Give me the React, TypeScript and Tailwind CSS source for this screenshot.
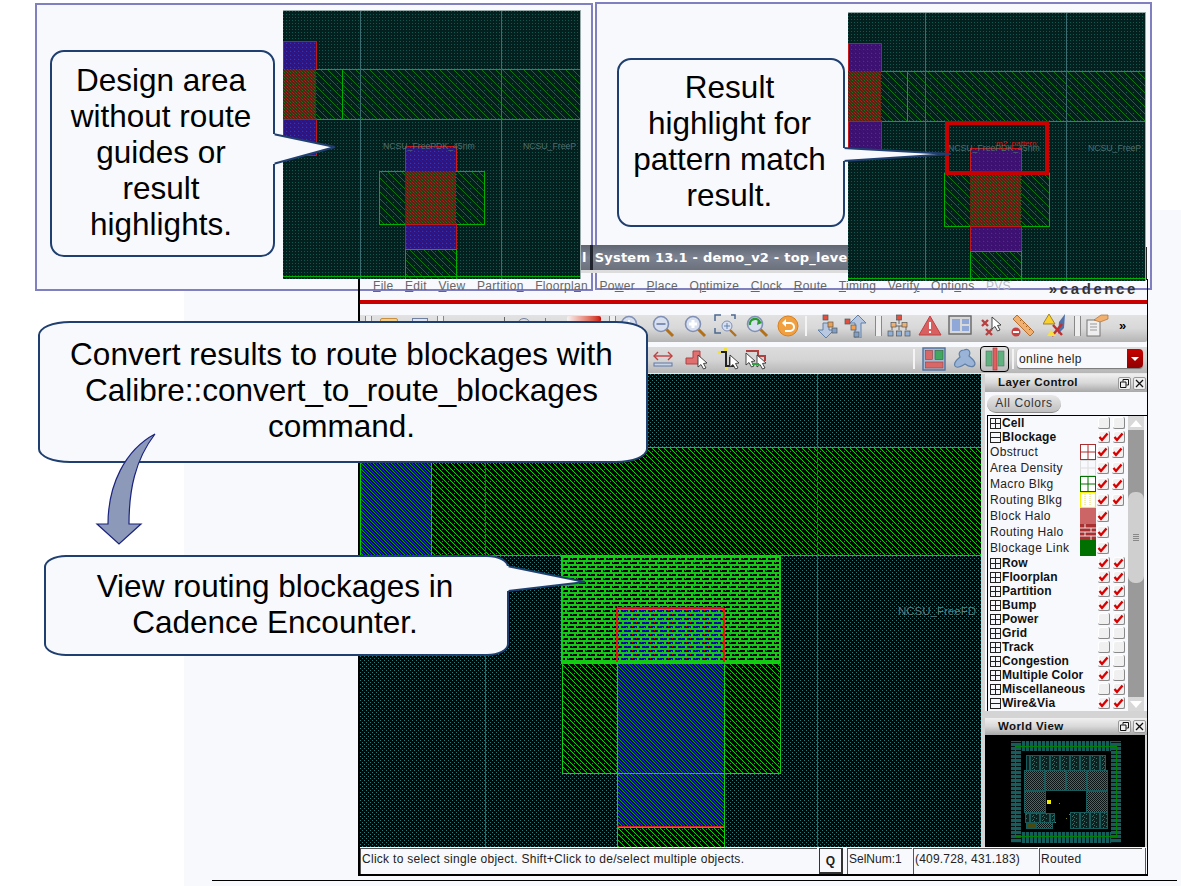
import React from "react";

const F = { fontFamily: '"Liberation Sans", Arial, sans-serif' };

const range = (n: number) => Array.from({ length: n }, (_, i) => i);

function Dither() {
  return (
    <>
      {range(6).map((y) =>
        range(6).map((x) => {
          const m = ((x - y) % 6 + 6) % 6;
          const c = m === 0 ? "#00a800" : m === 3 ? "#c80000" : m === 4 ? "#000060" : "#0000c8";
          return <rect key={`${x}-${y}`} x={x} y={y} width="1" height="1" fill={c} />;
        })
      )}
    </>
  );
}

function DiagPixels({ c, n }: { c: string; n: number }) {
  return (
    <>
      {range(n).map((i) => (
        <rect key={i} x={i} y={i} width="1" height="1" fill={c} />
      ))}
    </>
  );
}

function Defs() {
  return (
    <svg width="0" height="0" className="absolute">
      <defs>
        <pattern id="dots" width="4" height="4" patternUnits="userSpaceOnUse">
          <rect width="4" height="4" fill="#000" />
          <rect x="0" y="0" width="1" height="1" fill="#1a8080" />
          <rect x="2" y="2" width="1" height="1" fill="#1a8080" />
        </pattern>
        <pattern id="hatch" width="6" height="6" patternUnits="userSpaceOnUse">
          <rect width="6" height="6" fill="#000" />
          <rect x="4" y="1" width="1" height="1" fill="#1a8080" />
          <DiagPixels c="#00e000" n={6} />
        </pattern>
        <pattern id="brick" width="9" height="8" patternUnits="userSpaceOnUse">
          <rect width="9" height="8" fill="#14c814" />
          <rect x="0" y="2" width="7" height="2" fill="#000" />
          <rect x="3" y="6" width="6" height="2" fill="#000" />
          <rect x="0" y="6" width="1" height="2" fill="#000" />
          <rect x="1" y="2" width="1" height="1" fill="#1a8080" />
          <rect x="5" y="6" width="1" height="1" fill="#1a8080" />
        </pattern>
        <pattern id="brickblue" width="9" height="8" patternUnits="userSpaceOnUse">
          <rect width="9" height="8" fill="#14c814" />
          <rect x="0" y="2" width="7" height="2" fill="#0000b0" />
          <rect x="3" y="6" width="6" height="2" fill="#0000b0" />
          <rect x="0" y="6" width="1" height="2" fill="#0000b0" />
          <rect x="2" y="2" width="1" height="1" fill="#c80000" />
          <rect x="5" y="3" width="1" height="1" fill="#00a800" />
          <rect x="6" y="6" width="1" height="1" fill="#c80000" />
        </pattern>
        <pattern id="blueh" width="6" height="6" patternUnits="userSpaceOnUse">
          <Dither />
        </pattern>
        <pattern id="sd" width="3" height="3" patternUnits="userSpaceOnUse">
          <rect width="3" height="3" fill="#04201e" />
          <rect width="1" height="1" fill="#0b5a52" />
        </pattern>
        <pattern id="sh" width="7" height="7" patternUnits="userSpaceOnUse">
          <rect width="7" height="7" fill="#04201a" />
          <DiagPixels c="#067a10" n={7} />
          <rect x="5" y="2" width="1" height="1" fill="#0b5a52" />
        </pattern>
        <pattern id="spurple" width="4" height="4" patternUnits="userSpaceOnUse">
          <rect width="4" height="4" fill="#3c1070" />
          <DiagPixels c="#20209a" n={4} />
          <rect x="3" y="0" width="1" height="1" fill="#8a1c50" />
        </pattern>
        <pattern id="sred" width="3" height="3" patternUnits="userSpaceOnUse">
          <rect width="3" height="3" fill="#4a2a14" />
          <rect x="0" y="0" width="1" height="1" fill="#b01818" />
          <rect x="1" y="1" width="1" height="1" fill="#1e7018" />
          <rect x="2" y="2" width="1" height="1" fill="#8a2010" />
        </pattern>
        <pattern id="wmring" width="4" height="4" patternUnits="userSpaceOnUse">
          <rect width="4" height="4" fill="#175c5c" />
          <rect x="2" width="1" height="4" fill="#041414" />
        </pattern>
        <pattern id="wmringh" width="4" height="4" patternUnits="userSpaceOnUse">
          <rect width="4" height="4" fill="#175c5c" />
          <rect y="2" width="4" height="1" fill="#041414" />
        </pattern>
        <pattern id="wmchk" width="2" height="2" patternUnits="userSpaceOnUse">
          <rect width="2" height="2" fill="#0a1414" />
          <rect width="1" height="1" fill="#3c6e66" />
          <rect x="1" y="1" width="1" height="1" fill="#3c6e66" />
        </pattern>
        <pattern id="wmstr" width="10" height="4" patternUnits="userSpaceOnUse">
          <rect width="10" height="4" fill="#0f2020" />
          <rect x="3" width="1" height="1" fill="#3c6e66" />
          <rect x="5" y="1" width="1" height="1" fill="#3c6e66" />
          <rect x="7" y="2" width="1" height="1" fill="#3c6e66" />
          <rect x="4" y="3" width="1" height="1" fill="#3c6e66" />
          <rect width="2" height="4" fill="#175c5c" />
        </pattern>
      </defs>
    </svg>
  );
}

function SmallLayout({ result }: { result?: boolean }) {
  return (
    <svg width="297" height="268" viewBox="0 0 297 268" shapeRendering="crispEdges">
      <rect width="297" height="268" fill="url(#sd)" />
      <rect x="0" y="30" width="33" height="28" fill="url(#spurple)" stroke="#c01818" />
      <rect x="0" y="58" width="297" height="50" fill="url(#sh)" stroke="#00b000" />
      <rect x="0" y="58" width="33" height="50" fill="url(#sred)" />
      <rect x="0" y="108" width="33" height="36" fill="url(#spurple)" stroke="#c01818" />
      <path d="M59 58V108" stroke="#00b000" />
      <path d="M77 0V268M218 0V268" stroke="#3c6c70" />
      <rect x="122" y="135" width="51" height="25" fill="url(#spurple)" stroke="#d01818" />
      <rect x="96" y="160" width="105" height="53" fill="url(#sh)" stroke="#00b000" />
      <rect x="122" y="160" width="51" height="53" fill="url(#sred)" />
      <rect x="122" y="213" width="51" height="25" fill="url(#spurple)" stroke="#c01818" />
      <rect x="122" y="238" width="51" height="30" fill="url(#sh)" stroke="#00b000" />
      <path d="M0 265H297" stroke="#00b000" />
      <text x="100" y="138" fontSize="8.7" fill="#4f6f70" style={F} shapeRendering="auto">NCSU_FreePDK_45nm</text>
      <text x="240" y="138" fontSize="8.7" fill="#4f6f70" style={F} shapeRendering="auto">NCSU_FreeP</text>
      {result && (
        <>
          <rect x="99" y="110" width="100" height="50" fill="none" stroke="#c80000" strokeWidth="4" />
          <text x="148" y="133" fontSize="8" fill="#e01010" style={F} shapeRendering="auto">m2_pattern</text>
        </>
      )}
    </svg>
  );
}

function BigLayout() {
  return (
    <svg width="621" height="473" viewBox="360 374 621 473" shapeRendering="crispEdges">
      <rect x="360" y="374" width="621" height="473" fill="url(#dots)" />
      <rect x="360" y="447" width="621" height="108" fill="url(#hatch)" />
      <rect x="360" y="447" width="71" height="108" fill="url(#blueh)" />
      <path d="M360 447H981M360 555H981M431 447V555" stroke="#00d000" />
      <path d="M360.5 447V555" stroke="#00d000" />
      <path d="M485 374V847M817 374V847" stroke="#4c5454" />
      <rect x="562" y="556" width="218" height="107" fill="url(#brick)" />
      <rect x="617" y="608" width="107" height="55" fill="url(#brickblue)" />
      <path d="M617 608H724M617 608V663M724 608V663" stroke="#e01818" strokeWidth="1.4" fill="none" />
      <rect x="562" y="556" width="218" height="107" fill="none" stroke="#10d010" strokeWidth="1.4" />
      <rect x="562" y="663" width="218" height="110" fill="url(#hatch)" stroke="#10d010" />
      <rect x="617" y="663" width="107" height="110" fill="url(#blueh)" stroke="#10d010" />
      <rect x="617" y="773" width="107" height="54" fill="url(#blueh)" stroke="#10d010" />
      <path d="M617 827H724" stroke="#e02020" strokeWidth="1.4" />
      <rect x="617" y="827" width="107" height="22" fill="url(#hatch)" stroke="#10d010" />
      <text x="898" y="615" fontSize="11.5" fill="#6a7878" style={F} shapeRendering="auto">NCSU_FreeFD</text>
    </svg>
  );
}

function Callout({ pos, tail, children }: { pos: string; tail?: string; children: React.ReactNode }) {
  const pts = tail ? tail.split(" ") : [];
  return (
    <div className={`absolute flex items-center justify-center border-2 border-[#1f3f70] bg-[#f8f9fc] pb-[4px] pr-[3px] text-center text-[31.5px] leading-[36px] text-black ${pos}`} style={F}>
      {tail && (
        <svg width="1" height="1" className="absolute -left-[2px] -top-[2px] overflow-visible">
          <polygon points={tail} fill="#f8f9fc" stroke="none" />
          <polyline points={tail} fill="none" stroke="#1f3f70" strokeWidth="2" />
          <line x1={pts[0].split(",")[0]} y1={pts[0].split(",")[1]} x2={pts[2].split(",")[0]} y2={pts[2].split(",")[1]} stroke="#f8f9fc" strokeWidth="3" />
        </svg>
      )}
      <div>{children}</div>
    </div>
  );
}

const S = ({ children, w = 24 }: { children: React.ReactNode; w?: number }) => (
  <svg width={w} height="24" viewBox={`0 0 ${w} 24`} className="shrink-0">{children}</svg>
);

const Mag = ({ mark }: { mark?: React.ReactNode }) => (
  <S>
    <line x1="15" y1="15" x2="22" y2="22" stroke="#b0701c" strokeWidth="3" />
    <circle cx="10" cy="10" r="7.5" fill="#d8e0f0" stroke="#8090b4" strokeWidth="1.6" />
    {mark}
  </S>
);
const Cursor = ({ x, y }: { x: number; y: number }) => (
  <path transform={`translate(${x} ${y})`} d="M0 0L0 12L3 9.5L5.5 14L8 13L5.5 8.5L9 8Z" fill="#fff" stroke="#333" strokeWidth="0.9" />
);
const Box = ({ x, y, c }: { x: number; y: number; c: string }) => (
  <rect x={x} y={y} width="5" height="5" fill={c} stroke="#555" strokeWidth="0.7" />
);

const Grip = ({ cls }: { cls: string }) => (
  <div className={`h-[20px] w-[7px] shrink-0 border-x border-[#888] bg-[#eee] ${cls}`} />
);
const Sep = ({ cls }: { cls: string }) => <div className={`h-[20px] w-[2px] shrink-0 bg-[#f4f4f4] ${cls}`} />;

function ToolRow1() {
  return (
    <div className="flex h-[27px] items-center rounded-b-[2px] bg-gradient-to-b from-[#e2e2e2] via-[#d8d8d8] to-[#b4b4b4] pb-[5px] pl-[5px]">
      <Grip cls="" />
      <div className="ml-[8px] mt-[3px] h-[14px] w-[18px] self-start rounded-[2px] border border-[#c89040] bg-[#f0d090]" />
      <div className="ml-[14px] mt-[3px] h-[14px] w-[16px] self-start border border-[#7080a0] bg-[#e0e4f0]" />
      <Grip cls="ml-[9px]" />
      <div className="ml-[60px] mt-[2px] h-[14px] w-[1px] self-start bg-[#666]" />
      <div className="ml-[12px] mt-[3px] h-[14px] w-[14px] self-start rounded-full border border-[#7080a0]" />
      <div className="ml-[14px] mt-[3px] h-[14px] w-[14px] self-start border-l border-[#7080a0]" />
      <div className="ml-[8px] mt-[1px] h-[6px] w-[34px] self-start rounded-[2px] bg-gradient-to-r from-[#f4f4f4] to-[#c80000]" />
      <Grip cls="ml-[8px]" />
      <div className="ml-[3px]"><Mag mark={<path d="M6 10H14M10 6V14" stroke="#fff" strokeWidth="2" />} /></div>
      <div className="ml-[8px]"><Mag mark={<path d="M5.5 10H14.5" stroke="#8090b4" strokeWidth="2" />} /></div>
      <div className="ml-[8px]"><Mag mark={<path d="M6 10H14M10 6V14" stroke="#fff" strokeWidth="3" />} /></div>
      <div className="ml-[7px]">
        <S>
          <path d="M1 7V1H7M17 1H21V5M1 14V19H7" stroke="#4a6a90" strokeWidth="1.5" fill="none" />
          <circle cx="13" cy="12" r="5" fill="#d8e0f0" stroke="#8090b4" />
          <path d="M10 12H16M13 9V15" stroke="#6080b0" />
          <line x1="16" y1="16" x2="22" y2="22" stroke="#b0701c" strokeWidth="2.4" />
        </S>
      </div>
      <div className="ml-[7px]">
        <S>
          <line x1="15" y1="15" x2="22" y2="22" stroke="#b0701c" strokeWidth="3" />
          <circle cx="10" cy="10" r="7.5" fill="#d8e0f0" stroke="#8090b4" strokeWidth="1.6" />
          <path d="M5 11A5 5 0 0 1 15 9" stroke="#2a9a30" strokeWidth="2.4" fill="none" />
          <path d="M13 5L17 9L12 11Z" fill="#2a9a30" />
        </S>
      </div>
      <div className="ml-[7px]">
        <S>
          <circle cx="12" cy="12" r="10" fill="#f0a040" stroke="#d88020" />
          <path d="M8 9H14A4 4 0 0 1 14 17H9" stroke="#fff" strokeWidth="2" fill="none" />
          <path d="M10 5L6 9L10 13Z" fill="#fff" />
        </S>
      </div>
      <Sep cls="ml-[5px]" />
      <div className="ml-[7px]">
        <S>
          <path d="M9 9H15V16H20L12 24L4 16H9Z" fill="#b8c8e0" stroke="#6080a8" />
          <Box x={9} y={1} c="#e05040" />
          <Box x={14} y={8} c="#f0a050" />
          <Box x={18} y={14} c="#80a0c8" />
        </S>
      </div>
      <div className="ml-[6px]">
        <S>
          <path d="M11 24V9H6L14 1L22 9H17V24Z" fill="#b8c8e0" stroke="#6080a8" />
          <Box x={1} y={5} c="#e05040" />
          <Box x={7} y={11} c="#f0a050" />
          <Box x={10} y={18} c="#80a0c8" />
        </S>
      </div>
      <Grip cls="ml-[7px]" />
      <div className="ml-[5px]">
        <S>
          <path d="M12 6V10M5 16V12H19V16M12 12V16" stroke="#666" fill="none" />
          <rect x="9.5" y="1" width="5" height="5" fill="#e05040" stroke="#555" strokeWidth="0.7" />
          <rect x="4" y="8.5" width="5" height="4.5" fill="#f0b070" stroke="#555" strokeWidth="0.7" />
          <rect x="15" y="8.5" width="5" height="4.5" fill="#f0b070" stroke="#555" strokeWidth="0.7" />
          <Box x={1} y={17} c="#90b0d8" />
          <Box x={9.5} y={17} c="#90b0d8" />
          <Box x={18} y={17} c="#90b0d8" />
        </S>
      </div>
      <div className="ml-[7px]">
        <S>
          <path d="M12 2L23 21H1Z" fill="#d86060" stroke="#c04040" strokeLinejoin="round" />
          <rect x="11" y="8" width="2" height="7" fill="#fff" />
          <rect x="11" y="17" width="2" height="2" fill="#fff" />
        </S>
      </div>
      <div className="ml-[6px]">
        <S>
          <rect x="1" y="2" width="22" height="18" fill="#d8d8d8" stroke="#666" strokeWidth="1.4" />
          <rect x="4" y="5" width="8" height="12" fill="#90a8d8" />
          <rect x="14" y="5" width="7" height="5" fill="#90a8d8" />
          <rect x="14" y="12" width="7" height="5" fill="#90a8d8" />
        </S>
      </div>
      <div className="ml-[8px]">
        <S>
          <path d="M2 6L8 12M8 6L2 12M6 15L12 21M12 15L6 21" stroke="#b84040" strokeWidth="2.4" />
          <Cursor x={12} y={3} />
        </S>
      </div>
      <div className="ml-[7px]">
        <S>
          <path d="M6 1L23 18L19 22L2 5Z" fill="#f0b070" stroke="#b87030" />
          <path d="M9 7L11 5M12 10L14 8M15 13L17 11M18 16L20 14" stroke="#a06020" />
          <circle cx="5" cy="18" r="4.5" fill="#c84040" />
          <rect x="2" y="17" width="6" height="2" fill="#fff" />
        </S>
      </div>
      <div className="ml-[8px]">
        <S>
          <path d="M6 0L12 10H0Z" fill="#f8d030" stroke="#907010" strokeWidth="0.8" />
          <path d="M22 0L16 8L15 20L21 14Z" fill="#5070a8" />
          <path d="M9 22L19 10M10 11L19 21" stroke="#c03030" strokeWidth="2.4" />
          <path d="M8 16L13 22H4Z" fill="#f8e040" />
        </S>
      </div>
      <Grip cls="ml-[7px]" />
      <div className="ml-[4px]">
        <S>
          <rect x="2" y="6" width="13" height="16" fill="#eee" stroke="#777" />
          <path d="M5 10H12M5 13H12M5 16H12" stroke="#999" />
          <path d="M9 6L16 1H23V5L15 8Z" fill="#f0b070" stroke="#b07030" strokeWidth="0.7" />
        </S>
      </div>
      <span className="ml-[10px] text-[13px] font-bold text-black" style={F}>»</span>
    </div>
  );
}

function ToolRow2() {
  return (
    <div className="flex h-[26px] items-center bg-gradient-to-b from-[#dcdcdc] via-[#d4d4d4] to-[#b6b6b6] pb-[3px] pl-[292px]">
      <S w={22}>
        <path d="M2 9H20" stroke="#c04040" strokeWidth="1.4" />
        <path d="M6 5L2 9L6 13M16 5L20 9L16 13" stroke="#c04040" strokeWidth="1.4" fill="none" />
        <rect x="2" y="16" width="18" height="3" fill="#c8d4e8" stroke="#6078a8" />
      </S>
      <div className="ml-[10px]">
        <S>
          <path d="M2 11H9V4H16V17H2Z" fill="#e07070" stroke="#b04040" />
          <Cursor x={14} y={8} />
        </S>
      </div>
      <div className="ml-[8px]">
        <S>
          <path d="M4 5H10V19H19" stroke="#222" strokeWidth="2" fill="none" />
          <path d="M14 10V20" stroke="#222" strokeWidth="2" />
          <rect x="2" y="4" width="3" height="3" fill="#f0e040" />
          <rect x="8" y="1" width="3" height="3" fill="#f0e040" />
          <rect x="9" y="20" width="3" height="3" fill="#f0e040" />
          <Cursor x={14} y={8} />
        </S>
      </div>
      <div className="ml-[4px]">
        <S>
          <path d="M2 4H14V9H21V14" stroke="#b04040" strokeWidth="2" fill="none" />
          <Cursor x={2} y={6} />
          <Cursor x={13} y={8} />
          <path d="M8 17H15" stroke="#30a040" strokeWidth="2" />
        </S>
      </div>
      <Sep cls="ml-[145px]" />
      <div className="ml-[7px]">
        <S>
          <rect x="1" y="1" width="22" height="22" fill="#a8b8d0" stroke="#50709c" strokeWidth="1.4" />
          <rect x="3.5" y="3.5" width="7" height="9" fill="#d86868" stroke="#904040" strokeWidth="0.6" />
          <rect x="13" y="3.5" width="8" height="9" fill="#40a860" stroke="#306030" strokeWidth="0.6" />
          <rect x="3.5" y="15" width="17.5" height="6" fill="#d86868" stroke="#904040" strokeWidth="0.6" />
        </S>
      </div>
      <div className="ml-[7px]">
        <S>
          <path d="M11 3C16 1 18 5 16 9C18 11 22 13 22 17C21 21 16 20 12 17C9 19 4 22 2 19C0 15 5 12 7 10C5 6 7 3 11 3Z" fill="#9ab4d8" stroke="#6080a8" strokeWidth="1.2" />
        </S>
      </div>
      <div className="ml-[3px] flex h-[26px] w-[29px] items-center justify-center rounded-[4px] border border-black">
        <S w={20}>
          <rect x="1" y="4" width="6" height="15" fill="#60b080" stroke="#4a7a5a" strokeWidth="0.6" />
          <rect x="13" y="4" width="6" height="15" fill="#60b080" stroke="#4a7a5a" strokeWidth="0.6" />
          <rect x="8" y="1" width="4" height="22" fill="#e06060" stroke="#a03030" strokeWidth="0.6" />
        </S>
      </div>
      <Sep cls="ml-[3px]" />
      <div className="ml-[3px] flex h-[19px] w-[126px] items-center justify-between overflow-hidden rounded-[4px] bg-[#f8f9fc] shadow-[0_1px_1px_#777]">
        <span className="pl-[2px] text-[12px] tracking-[0.45px] text-[#222]" style={F}>online help</span>
        <div className="flex h-full w-[16px] items-center justify-center bg-gradient-to-b from-[#c80000] to-[#900000]">
          <div className="h-0 w-0 border-x-[4px] border-t-[4px] border-x-transparent border-t-white" />
        </div>
      </div>
    </div>
  );
}

const Check = ({ on }: { on: number }) => (
  <div className="flex h-[12px] w-[12px] shrink-0 items-center justify-center rounded-[2px] border-b border-r border-[#888] bg-[#f0f0f0] shadow-[inset_1px_1px_0_#fff]">
    {on === 1 && (
      <svg width="11" height="10" viewBox="0 0 11 10">
        <path d="M1.5 5L4 8L9.5 1.5" stroke="#d80000" strokeWidth="2.4" fill="none" />
      </svg>
    )}
  </div>
);

const Expand = ({ open }: { open?: boolean }) => (
  <svg width="11" height="11" viewBox="0 0 11 11" className="shrink-0">
    <rect x="0.5" y="0.5" width="10" height="10" fill="none" stroke="#222" />
    <path d={open ? "M0 5.5H11" : "M0 5.5H11M5.5 0V11"} stroke="#222" />
  </svg>
);

const Swatch = ({ k }: { k: string }) => {
  const grid = "M0 8H16M8 0V16";
  return (
    <svg width="16" height="16" viewBox="0 0 16 16" className="shrink-0">
      {k === "obs" && (<><rect x="0.5" y="0.5" width="15" height="15" fill="#fff" stroke="#a83030" /><path d={grid} stroke="#a83030" /></>)}
      {k === "area" && (<><rect x="0.5" y="0.5" width="15" height="15" fill="#f8f9fc" stroke="#ddd" /><path d={grid} stroke="#ddd" /></>)}
      {k === "macro" && (<><rect x="0.5" y="0.5" width="15" height="15" fill="#fff" stroke="#007000" strokeWidth="1" /><path d={grid} stroke="#007000" /></>)}
      {k === "rout" && (<><rect x="0.5" y="0.5" width="15" height="15" fill="#fff" stroke="#f0f000" strokeWidth="1.2" /><path d="M5 2V14M10 2V14" stroke="#e8d860" strokeDasharray="1 1" /></>)}
      {k === "halo" && <rect width="16" height="16" fill="#cc6666" />}
      {k === "rhalo" && (<><rect width="16" height="16" fill="#a83030" /><path d="M0 4H16M0 8H16M0 12H16M5 0V4M11 4V8M5 8V12M11 12V16" stroke="#f0e0e0" /></>)}
      {k === "link" && <rect width="16" height="16" fill="#007000" />}
    </svg>
  );
};

const mainRows: [string, boolean, number, number][] = [
  ["Row", false, 1, 1], ["Floorplan", false, 1, 1], ["Partition", false, 1, 1], ["Bump", false, 1, 1],
  ["Power", false, 0, 1], ["Grid", false, 0, 0], ["Track", false, 0, 0], ["Congestion", false, 1, 0],
  ["Multiple Color", false, 1, 0], ["Miscellaneous", false, 0, 1], ["Wire&Via", true, 1, 1],
];
const subRows: [string, string, number, number][] = [
  ["Obstruct", "obs", 1, 1], ["Area Density", "area", 1, 1], ["Macro Blkg", "macro", 1, 1], ["Routing Blkg", "rout", 1, 1],
  ["Block Halo", "halo", 1, -1], ["Routing Halo", "rhalo", 1, -1], ["Blockage Link", "link", 1, -1],
];

const MainRow = ({ r }: { r: [string, boolean, number, number] }) => (
  <div className="flex h-[14px] items-center pl-[2px]">
    <Expand open={r[1]} />
    <span className="ml-[1px] w-[96px] whitespace-nowrap text-[12px] font-bold leading-none tracking-[0.1px] text-[#111]">{r[0]}</span>
    <Check on={r[2]} />
    <div className="ml-[3px]"><Check on={r[3]} /></div>
  </div>
);

const PanelHead = ({ title }: { title: string }) => (
  <div className="flex h-[18px] items-center bg-gradient-to-b from-[#f0f0f0] via-[#d8d8d8] to-[#a8a8a8] pl-[13px] pr-[1px]">
    <span className="flex-1 text-[11.5px] font-bold tracking-[0.4px] text-[#111]">{title}</span>
    <div className="flex h-[13px] w-[13px] items-center justify-center rounded-[2px] border border-[#999] bg-[#eee]">
      <svg width="9" height="9" viewBox="0 0 9 9"><path d="M3 2.5V0.5H8.5V6H6.5M0.5 3H6V8.5H0.5Z" fill="none" stroke="#111" /></svg>
    </div>
    <div className="ml-[2px] flex h-[13px] w-[13px] items-center justify-center rounded-[2px] border border-[#999] bg-[#eee]">
      <svg width="9" height="9" viewBox="0 0 9 9"><path d="M1 1L8 8M8 1L1 8" stroke="#111" strokeWidth="1.3" /></svg>
    </div>
  </div>
);

function LayerPanel() {
  return (
    <div className="flex h-[342px] flex-col bg-[#f8f9fc]" style={F}>
      <PanelHead title="Layer Control" />
      <div className="flex h-[23px] items-center pl-[2px]">
        <div className="flex h-[18px] w-[74px] items-center justify-center rounded-[9px] border-b border-[#888] bg-gradient-to-b from-[#e8e8e8] to-[#c0c0c0] text-[12px] tracking-[0.6px] text-[#333]">All Colors</div>
      </div>
      <div className="ml-[2px] flex flex-1 border-l border-t border-black">
        <div className="w-[140px]">
          <MainRow r={["Cell", false, 0, 0]} />
          <MainRow r={["Blockage", true, 1, 1]} />
          {subRows.map((r) => (
            <div key={r[0]} className="flex h-[16px] items-center pl-[2px]">
              <span className="w-[90px] whitespace-nowrap text-[12px] leading-none tracking-[0.35px] text-[#222]">{r[0]}</span>
              <Swatch k={r[1]} />
              <div className="ml-[1px]"><Check on={r[2]} /></div>
              {r[3] >= 0 && <div className="ml-[3px]"><Check on={r[3]} /></div>}
            </div>
          ))}
          {mainRows.map((r) => <MainRow key={r[0]} r={r} />)}
        </div>
        <div className="flex h-[295px] w-[16px] flex-col bg-[#9a9a9a]">
          <div className="flex h-[14px] items-center justify-center bg-[#d8d8d8]">
            <div className="h-0 w-0 border-x-[6px] border-b-[7px] border-x-transparent border-b-white" />
          </div>
          <div className="mt-[62px] flex h-[91px] flex-col items-center justify-center gap-[1px] rounded-[7px] bg-[#cfcfcf]">
            <div className="h-[1px] w-[6px] bg-[#888]" />
            <div className="h-[1px] w-[6px] bg-[#888]" />
            <div className="h-[1px] w-[6px] bg-[#888]" />
            <div className="h-[1px] w-[6px] bg-[#888]" />
          </div>
          <div className="mt-auto flex h-[14px] items-center justify-center bg-[#d8d8d8]">
            <div className="h-0 w-0 border-x-[6px] border-t-[7px] border-x-transparent border-t-white" />
          </div>
        </div>
      </div>
    </div>
  );
}

function WorldMap() {
  return (
    <svg width="160" height="112" viewBox="986 735 160 112" shapeRendering="crispEdges">
      <rect x="986" y="735" width="160" height="112" fill="#000" />
      <rect x="1012" y="741" width="110" height="10" fill="url(#wmring)" />
      <rect x="1012" y="832" width="110" height="11" fill="url(#wmring)" />
      <rect x="1012" y="741" width="10" height="102" fill="url(#wmringh)" />
      <rect x="1112" y="741" width="10" height="102" fill="url(#wmringh)" />
      <rect x="1016" y="746" width="101" height="90" fill="none" stroke="#008000" />
      <rect x="1027" y="755" width="79" height="15" fill="url(#wmstr)" stroke="#175c5c" />
      {[1025, 1046, 1067, 1088].map((x) => (
        <rect key={x} x={x} y="770" width="20" height="20" fill="url(#wmchk)" stroke="#175c5c" />
      ))}
      <rect x="1025" y="791" width="21" height="21" fill="url(#wmchk)" stroke="#175c5c" />
      <rect x="1087" y="791" width="21" height="21" fill="url(#wmchk)" stroke="#175c5c" />
      <rect x="1026" y="813" width="29" height="9" fill="url(#wmstr)" stroke="#175c5c" />
      <rect x="1027" y="822" width="10" height="6" fill="#4a4a10" stroke="#175c5c" />
      <rect x="1037" y="822" width="16" height="6" fill="url(#wmchk)" stroke="#175c5c" />
      <rect x="1071" y="812" width="37" height="16" fill="url(#wmstr)" stroke="#175c5c" />
      <rect x="1048" y="800" width="4" height="4" fill="#f0f000" />
      <rect x="1056" y="822" width="1" height="1" fill="#808020" />
      <rect x="1067" y="818" width="1" height="1" fill="#808020" />
      <rect x="1060" y="803" width="1" height="1" fill="#808020" />
      <rect x="1070" y="814" width="1" height="1" fill="#808020" />
    </svg>
  );
}

const menus: [string, number][] = [
  ["File", 0], ["Edit", 0], ["View", 0], ["Partition", 8], ["Floorplan", 7], ["Power", 2], ["Place", 0],
  ["Optimize", 1], ["Clock", 0], ["Route", 0], ["Timing", 0], ["Verify", 5], ["Options", 4],
];

function Window() {
  return (
    <div className="absolute left-[358px] top-[279px] flex h-[597px] w-[790px] flex-col border-b-2 border-l-2 border-r border-black" style={F}>
      <div className="flex h-[21px] items-start justify-between pl-[13px] pr-[9px]">
        <div className="flex gap-[11.5px] text-[12px] leading-[14px] tracking-[0.3px] text-[#666]">
          {menus.map(([m, i]) => (
            <span key={m}>
              {m.slice(0, i)}<span className="underline">{m[i]}</span>{m.slice(i + 1)}
            </span>
          ))}
          <span className="text-[#b4bac4]">PVS</span>
        </div>
        <div className="mt-[2px] text-[15px] font-bold leading-[15px] tracking-[2.6px] text-[#333]">»cadence</div>
      </div>
      <div className="h-[4px] bg-[#c80000]" />
      <div className="h-[11px]" />
      <ToolRow1 />
      <div className="h-[5px]" />
      <ToolRow2 />
      <div className="h-[1px] bg-[#e8e8e8]" />
      <div className="flex h-[473px]">
        <div className="w-[621px]"><BigLayout /></div>
        <div className="flex w-[166px] flex-col bg-[#d4d4d4] pl-[4px]">
          <LayerPanel />
          <div className="h-[7px] shrink-0" />
          <PanelHead title="World View" />
          <div><WorldMap /></div>
        </div>
      </div>
      <div className="flex flex-1 items-stretch bg-[#f8f9fc] pt-[1px] text-[12px] leading-[20px] text-[#222]">
        <div className="flex w-[457px] items-start border-l border-t border-[#555] pl-[1px] tracking-[0.28px]">Click to select single object. Shift+Click to de/select multiple objects.</div>
        <div className="ml-[2px] flex w-[24px] items-center justify-center border-b-2 border-l border-r-2 border-t border-[#333] text-[12px] font-bold">Q</div>
        <div className="ml-[4px] flex w-[65px] items-start border-l border-t border-[#555] pl-[1px]">SelNum:1</div>
        <div className="ml-[1px] flex w-[125px] items-start border-l border-t border-[#555] pl-[1px] tracking-[0.2px]">(409.728, 431.183)</div>
        <div className="ml-[1px] flex w-[103px] items-start border-l border-t border-[#555] pl-[1px] tracking-[0.3px]">Routed</div>
        <div className="ml-[3px] w-[1px] bg-[#555]" />
      </div>
    </div>
  );
}

export default function App() {
  return (
    <div className="relative h-[886px] w-[1181px] overflow-hidden bg-white" style={F}>
      <Defs />
      <div className="absolute left-[184px] top-[210px] h-[676px] w-[997px] bg-[#f8f9fc]" />
      <div className="absolute left-[35px] top-[3px] h-[288px] w-[558px] border-2 border-[#8080c0] bg-[#f8f9fc]" />
      <div className="absolute left-[595px] top-[2px] h-[288px] w-[557px] border-2 border-[#8080c0] bg-[#f8f9fc]" />

      <Window />
      <div className="absolute left-[212px] top-[880px] h-[1px] w-[965px] bg-black" />
      <div className="absolute left-[1146px] top-[247px] h-[33px] w-[1px] bg-[#222]" />

      <div className="absolute left-[580px] top-[245px] h-[28px] w-[268px] bg-[#dcdcdc]">
        <div className="flex h-[25px] items-center whitespace-nowrap bg-gradient-to-b from-[#5f6672] via-[#7c8290] to-[#6a707c] text-[13px] font-bold tracking-[0.22px] text-white" style={{ fontFamily: '"DejaVu Sans", sans-serif' }}>
          <span className="pl-[2px]">l</span>
          <span className="ml-[3px] h-full w-[3px] bg-[#20242c]" />
          <span className="pl-[2px]">System 13.1 - demo_v2 - top_leve</span>
        </div>
      </div>

      <div className="absolute left-[283px] top-[10px] border-r border-t border-[#9aa] leading-[0]"><SmallLayout /></div>
      <div className="absolute left-[848px] top-[12px] border-r border-t border-[#9aa] leading-[0]"><SmallLayout result /></div>

      <Callout pos="left-[50px] top-[50px] h-[207px] w-[225px] rounded-[14px]" tail="223,84 285,97 223,114">
        Design area<br />without route<br />guides or<br />result<br />highlights.
      </Callout>
      <Callout pos="left-[617px] top-[58px] h-[169px] w-[228px] rounded-[14px]" tail="226,90 334,96 226,103">
        Result<br />highlight for<br />pattern match<br />result.
      </Callout>
      <Callout pos="left-[38px] top-[321px] h-[142px] w-[610px] rounded-[32px/14px]">
        Convert results to route blockages with<br />Calibre::convert_to_route_blockages<br />command.
      </Callout>
      <Callout pos="left-[44px] top-[555px] h-[101px] w-[465px] rounded-[22px/12px]" tail="463,11 541,27 463,36">
        View routing blockages in<br />Cadence Encounter.
      </Callout>
      <svg width="70" height="120" viewBox="90 430 70 120" className="absolute left-[90px] top-[430px]">
        <path d="M155 434C125 450 108 485 108 524H97L119 544L141 524H129C129 490 135 460 155 434Z" fill="#8d99b8" stroke="#1a237e" strokeWidth="1.2" />
      </svg>
    </div>
  );
}
